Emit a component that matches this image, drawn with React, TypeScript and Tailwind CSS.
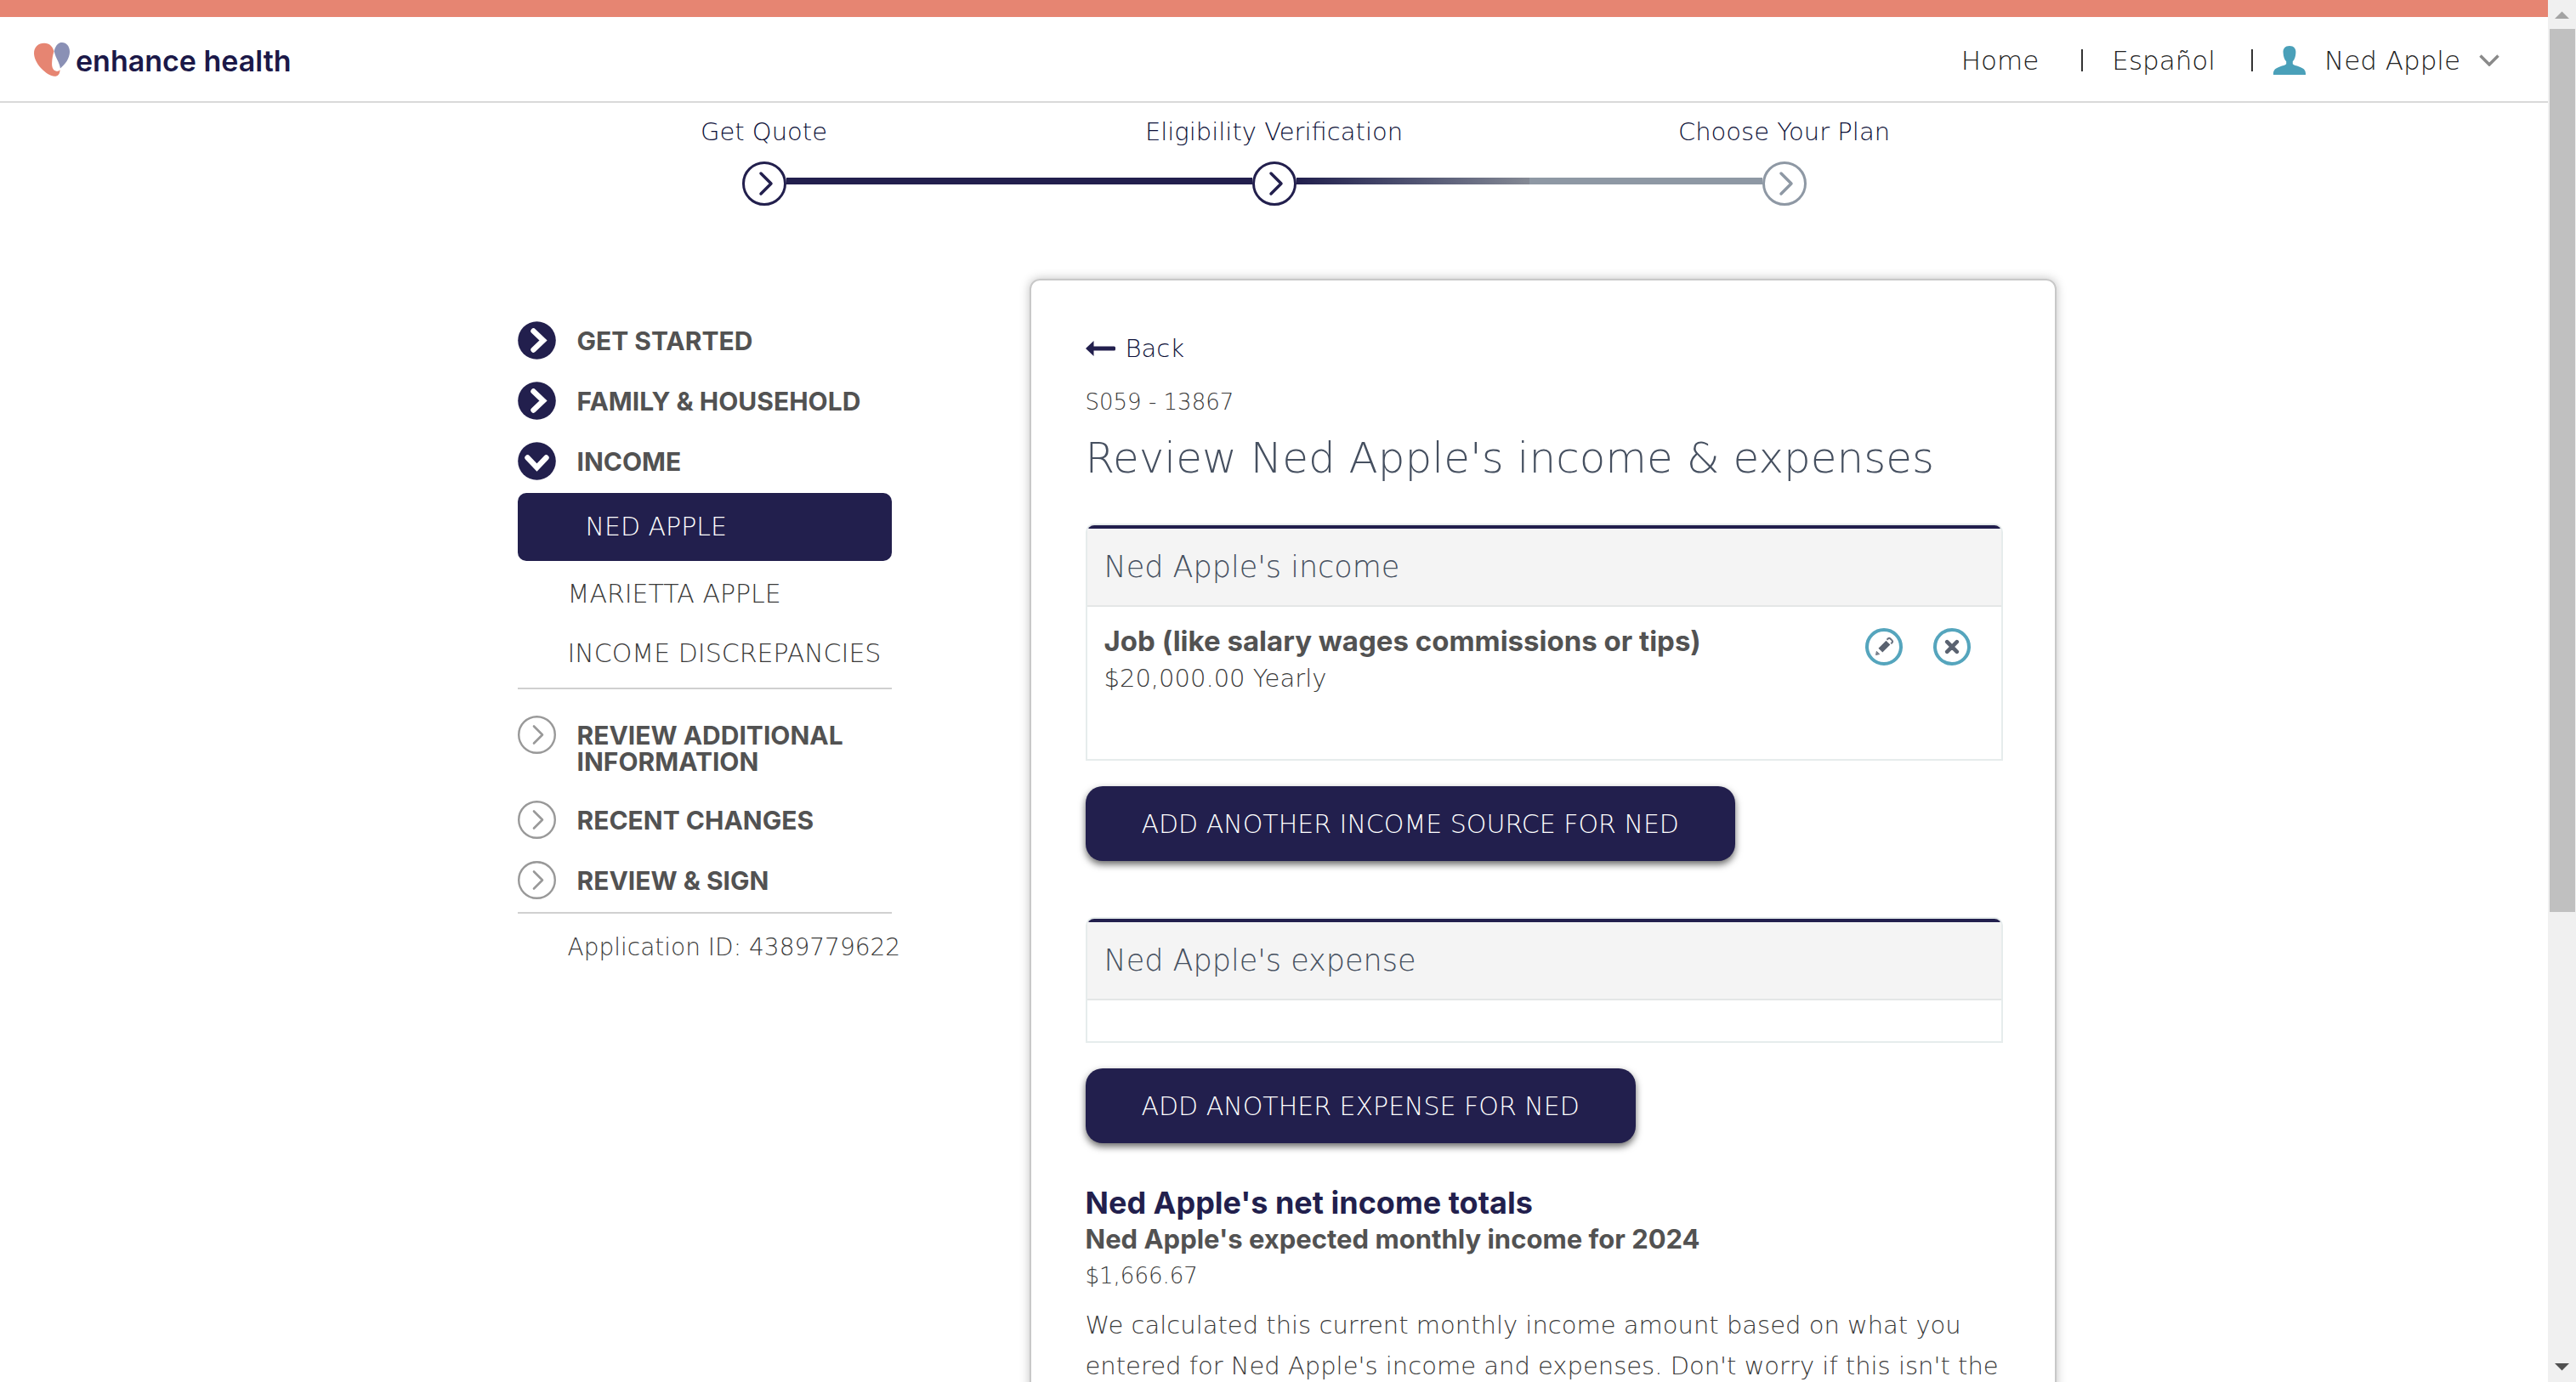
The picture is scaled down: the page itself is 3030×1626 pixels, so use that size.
import type { ReactNode } from "react";

type IconProps = { className?: string };

function HeartLogo() {
  return (
    <svg viewBox="0 0 42 40" className="h-10 w-[42px]" aria-hidden="true">
      <path
        d="M12 .7C5 .7 0 5.4 0 12.600c0 5.500 2.900 12 8.500 17.900 5.500 5.700 11.400 9.200 15.600 9.300 4 .1 6.500-2.800 6.400-7.800-.8 1.400-2.300 2-4.200 1.700-3.500-.5-5.400-4-5.200-9.400.2-5.300 1.100-9.800 2.400-13.700C22 4.700 18.400.7 12 .7Z"
        fill="#e68572"
      />
      <path
        d="M33 0c-4.300 0-7 2.400-9.300 9.900.9 4.800 2.700 8.400 4.500 12.100 1.200 2.700 2.200 5.200 2.700 8.400C36.500 26 42 18.600 42 11 42 4.300 38 0 33 0Z"
        fill="#8a90b5"
      />
    </svg>
  );
}

function PersonIcon() {
  return (
    <svg viewBox="0 0 38 34" className="h-[34px] w-[38px]" fill="#4aa0b9" aria-hidden="true">
      <path d="M19 0c-5.200 0-7.800 3.300-7.400 8 .2 4.300 1.400 8.300 3.600 10.200v3.100c-1.200 1.500-4 1.900-7.600 3.100C2.500 26.100 0 28.300 0 32.600V34h38v-1.400c0-4.300-2.500-6.500-7.600-8.200-3.600-1.200-6.400-1.600-7.600-3.100v-3.100c2.200-1.900 3.400-5.900 3.600-10.200C26.800 3.300 24.200 0 19 0Z" />
    </svg>
  );
}

function ChevronDown() {
  return (
    <svg viewBox="0 0 24 14" className="h-[14px] w-6" fill="none" stroke="#8a8a8a" strokeWidth="3.500" aria-hidden="true">
      <path d="M1.500 1.500 12 12 22.500 1.500" />
    </svg>
  );
}

function StepCircle({ className }: IconProps) {
  return (
    <svg viewBox="0 0 52 52" className={className} fill="none" stroke="currentColor" aria-hidden="true">
      <circle cx="26" cy="26" r="24.500" strokeWidth="3" />
      <path d="M22 14 34 26 22 38" strokeWidth="3.500" strokeLinecap="round" strokeLinejoin="round" />
    </svg>
  );
}

function NavIcon({ state }: { state: "done" | "open" | "todo" }) {
  if (state === "todo") {
    return (
      <svg viewBox="0 0 45 45" className="size-[45px] shrink-0" fill="none" stroke="#999" aria-hidden="true">
        <circle cx="22.500" cy="22.500" r="21.300" strokeWidth="2.400" />
        <path d="M19 12.500 29 22.500 19 32.500" strokeWidth="2.600" strokeLinecap="round" strokeLinejoin="round" />
      </svg>
    );
  }
  return (
    <svg viewBox="0 0 45 45" className="size-[45px] shrink-0" aria-hidden="true">
      <circle cx="22.500" cy="22.500" r="22.300" fill="#221f4d" />
      <path
        d={state === "open" ? "M11.500 18.500 22.500 30 33.500 18.500" : "M18.500 11.500 30 22.500 18.500 33.500"}
        fill="none"
        stroke="#fff"
        strokeWidth="6.400"
        strokeLinecap="round"
      />
    </svg>
  );
}

function ArrowLeft() {
  return (
    <svg viewBox="0 0 35 18" className="h-[18px] w-[35px]" fill="#221f4d" aria-hidden="true">
      <path d="M0 9 9.500 0v6.500H33.500a1.500 1.500 0 0 1 1.500 1.500v2a1.500 1.500 0 0 1-1.500 1.500H9.500V18Z" />
    </svg>
  );
}

function EditIcon() {
  return (
    <svg viewBox="0 0 44 44" className="size-11" aria-hidden="true">
      <circle cx="22" cy="22" r="20" fill="none" stroke="#55a5bd" strokeWidth="4" />
      <path d="M15.500 23.800 24.500 14.700l4.800 4.800-9 9.100Z" fill="#5a6270" />
      <path d="M25.500 13.700l1.200-1.200a2 2 0 0 1 2.800 0l1.900 1.900a2 2 0 0 1 0 2.800l-1.200 1.200" fill="none" stroke="#6b7280" strokeWidth="2" />
      <path d="M13.300 27.300 16.800 30.600l-4.300 1Z" fill="#7b828d" stroke="#7b828d" strokeLinejoin="round" />
    </svg>
  );
}

function RemoveIcon() {
  return (
    <svg viewBox="0 0 44 44" className="size-11" aria-hidden="true">
      <circle cx="22" cy="22" r="20" fill="none" stroke="#55a5bd" strokeWidth="4" />
      <path d="M16.200 16.200 27.800 27.800M27.800 16.200 16.200 27.800" stroke="#5a6270" strokeWidth="4.600" strokeLinecap="round" />
    </svg>
  );
}

function Header() {
  return (
    <header className="flex h-[101px] items-center justify-between border-b-2 border-[#d9d9d9] pr-[57px] pl-10 text-[31px] leading-10 text-[#222]">
      <a href="#home" className="flex items-center gap-[7px]">
        <HeartLogo />
        <span className="pt-1 font-['Inter',sans-serif] text-[34px] font-semibold text-[#1b1848]">enhance health</span>
      </a>
      <nav className="flex items-center pt-[2px]">
        <a href="#home">Home</a>
        <span className="mr-[34px] ml-[50px] h-[26px] w-[2px] bg-[#333]" />
        <a href="#es">Español</a>
        <span className="mr-6 ml-[42px] h-[26px] w-[2px] bg-[#333]" />
        <button type="button" className="flex items-center gap-[22px]">
          <PersonIcon />
          Ned Apple
          <ChevronDown />
        </button>
      </nav>
    </header>
  );
}

const steps = [
  { label: "Get Quote", circle: "text-[#221f4d]", before: "", after: "bg-[#221f4d]" },
  {
    label: "Eligibility Verification",
    circle: "text-[#221f4d]",
    before: "bg-[#221f4d]",
    after: "bg-linear-to-r from-[#221f4d] to-[#848994]",
  },
  { label: "Choose Your Plan", circle: "text-[#8e98a4]", before: "bg-[#8e98a4]", after: "" },
];

function Steps() {
  return (
    <ol className="mx-auto grid w-full max-w-[1800px] grid-cols-3 pt-[14px]">
      {steps.map((s) => (
        <li key={s.label} className="text-center text-[29px] leading-10 text-[#0c1038]">
          {s.label}
          <div className="mt-[15px] flex items-center">
            <span className={`mb-[6px] h-2 flex-1 ${s.before}`} />
            <StepCircle className={`size-[52px] ${s.circle}`} />
            <span className={`mb-[6px] h-2 flex-1 ${s.after}`} />
          </div>
        </li>
      ))}
    </ol>
  );
}

function NavItem({ state, children }: { state: "done" | "open" | "todo"; children: string }) {
  return (
    <a
      href="#section"
      className="flex items-start gap-[25px] font-['Inter',sans-serif] text-[30px] leading-[31px] font-bold text-[#525252]"
    >
      <NavIcon state={state} />
      <span className="pt-2 pb-1">{children}</span>
    </a>
  );
}

function Sidebar() {
  return (
    <aside className="w-[440px] shrink-0 pt-[50px] text-[30px] text-[#3a3a3a]">
      <nav>
        <div className="flex flex-col gap-[26px]">
          <NavItem state="done">GET STARTED</NavItem>
          <NavItem state="done">FAMILY &amp; HOUSEHOLD</NavItem>
          <NavItem state="open">INCOME</NavItem>
        </div>
        <ul className="mt-[15px] border-b-2 border-[#d0d0d0] pb-[5px] leading-[70px] whitespace-nowrap">
          <li className="mb-1 rounded-[10px] bg-[#221f4d] pl-20 leading-[80px] text-white">
            <a href="#ned">NED APPLE</a>
          </li>
          <li className="pl-[59px]">
            <a href="#marietta">MARIETTA APPLE</a>
          </li>
          <li className="pl-[59px]">
            <a href="#discrepancies">INCOME DISCREPANCIES</a>
          </li>
        </ul>
        <div className="flex flex-col gap-[26px] border-b-2 border-[#d0d0d0] pt-[31px] pb-[15px]">
          <NavItem state="todo">REVIEW ADDITIONAL INFORMATION</NavItem>
          <NavItem state="todo">RECENT CHANGES</NavItem>
          <NavItem state="todo">REVIEW &amp; SIGN</NavItem>
        </div>
      </nav>
      <p className="mt-5 pl-[59px] text-[28px] leading-10 whitespace-nowrap">Application ID: 4389779622</p>
    </aside>
  );
}

function Panel({ title, children }: { title: string; children?: ReactNode }) {
  return (
    <section className="overflow-hidden rounded-t-[10px] border-2 border-[#e6ecec]">
      <h2 className="border-t-4 border-b-2 border-t-[#221f4d] border-b-[#e4e6e6] bg-[#f4f4f4] px-5 text-[35px] leading-[90px] text-[#465060]">
        {title}
      </h2>
      {children}
    </section>
  );
}

function PrimaryButton({ children }: { children: string }) {
  return (
    <button
      type="button"
      className="mt-[30px] block h-[88px] rounded-[20px] bg-[#221f4d] px-[66px] text-[30px] text-white shadow-[0_4px_8px_rgba(0,0,0,0.6)]"
    >
      {children}
    </button>
  );
}

function ReviewCard() {
  return (
    <main className="w-[1208px] shrink-0 rounded-xl border-2 border-[#c8c8c8] pt-[60px] pr-[61px] pb-16 pl-16 text-[29px] text-[#3a3a3a] shadow-[0_0_12px_rgba(0,0,0,0.25)]">
      <a href="#back" className="flex items-center gap-3 leading-10 text-[#0c1038]">
        <ArrowLeft />
        Back
      </a>
      <p className="mt-[23px] text-[26px] leading-10">S059 - 13867</p>
      <h1 className="mt-[14px] mb-[45px] text-[50px] leading-[64px] text-[#465060]">
        Review Ned Apple&apos;s income &amp; expenses
      </h1>
      <Panel title="Ned Apple's income">
        <div className="flex items-start justify-between pt-[18px] pr-9 pb-[73px] pl-5 leading-[44px]">
          <div>
            <h3 className="font-['Inter',sans-serif] text-[33px] font-bold text-[#525252]">
              Job (like salary wages commissions or tips)
            </h3>
            <p>$20,000.00 Yearly</p>
          </div>
          <div className="flex gap-9 pt-[7px]">
            <button type="button" aria-label="Edit income">
              <EditIcon />
            </button>
            <button type="button" aria-label="Remove income">
              <RemoveIcon />
            </button>
          </div>
        </div>
      </Panel>
      <PrimaryButton>ADD ANOTHER INCOME SOURCE FOR NED</PrimaryButton>
      <div className="mt-[66px]">
        <Panel title="Ned Apple's expense">
          <div className="h-12" />
        </Panel>
      </div>
      <PrimaryButton>ADD ANOTHER EXPENSE FOR NED</PrimaryButton>
      <h2 className="mt-12 font-['Inter',sans-serif] text-[36px] leading-[44px] font-bold text-[#221f4d]">
        Ned Apple&apos;s net income totals
      </h2>
      <h3 className="font-['Inter',sans-serif] text-[31px] leading-[42px] font-bold text-[#525252]">
        Ned Apple&apos;s expected monthly income for 2024
      </h3>
      <p className="text-[26px] leading-[44px]">$1,666.67</p>
      <p className="mt-3 leading-[48px]">
        We calculated this current monthly income amount based on what you entered for Ned Apple&apos;s income and
        expenses. Don&apos;t worry if this isn&apos;t the
      </p>
    </main>
  );
}

function ScrollBar() {
  return (
    <div className="flex w-[33px] shrink-0 flex-col items-center bg-[#f0f0f0]" aria-hidden="true">
      <svg viewBox="0 0 33 34" className="h-[34px] w-[33px]" fill="#a3a3a3">
        <path d="M8 22 16.500 13.500 25 22Z" />
      </svg>
      <div className="flex w-[30px] flex-1 flex-col">
        <div className="h-2/3 bg-[#c0c0c0]" />
      </div>
      <svg viewBox="0 0 33 34" className="h-[34px] w-[33px]" fill="#505050">
        <path d="M8 12 16.500 20.500 25 12Z" />
      </svg>
    </div>
  );
}

export default function App() {
  return (
    <div className="flex h-screen overflow-hidden bg-white font-['DejaVu_Sans',sans-serif] font-light">
      <div className="min-w-0 flex-1 overflow-hidden border-t-20 border-[#e68572]">
        <Header />
        <Steps />
        <div className="mx-auto mt-[86px] flex w-full max-w-[1840px] items-start justify-between pl-[30px]">
          <Sidebar />
          <ReviewCard />
        </div>
      </div>
      <ScrollBar />
    </div>
  );
}
